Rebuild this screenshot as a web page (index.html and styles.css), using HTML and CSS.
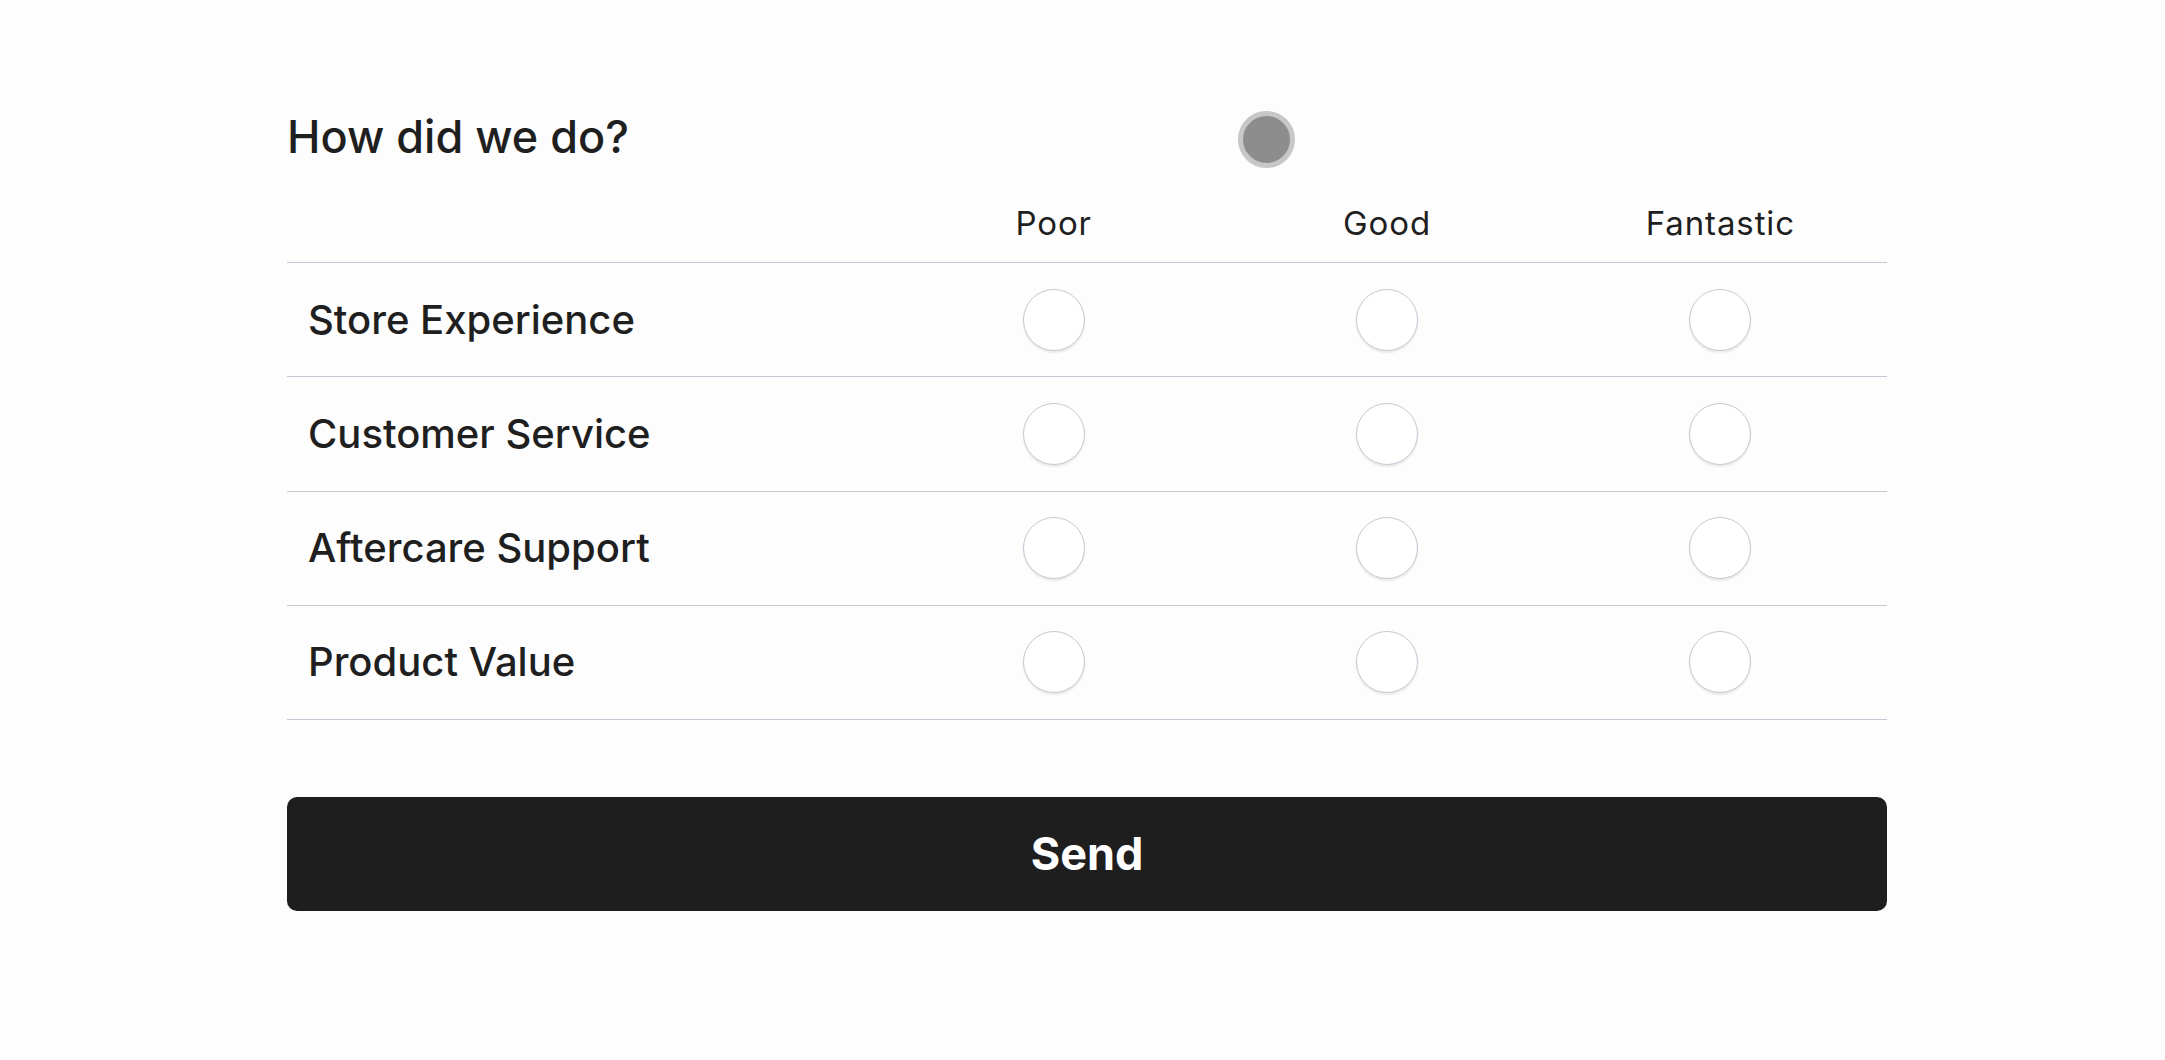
FILE: index.html
```html
<!DOCTYPE html>
<html lang="en">
<head>
<meta charset="utf-8">
<title>How did we do?</title>
<link rel="stylesheet" href="styles.css">
</head>
<body>
<main class="survey">
  <h1 class="survey-title">How did we do?</h1>
  <span class="indicator" aria-hidden="true"></span>
  <div class="grid">
    <div class="row head">
      <div class="label"></div>
      <div class="col-h">Poor</div>
      <div class="col-h">Good</div>
      <div class="col-h">Fantastic</div>
    </div>
    <div class="row">
      <div class="label">Store Experience</div>
      <div class="cell"><span class="radio"></span></div>
      <div class="cell"><span class="radio"></span></div>
      <div class="cell"><span class="radio"></span></div>
    </div>
    <div class="row">
      <div class="label">Customer Service</div>
      <div class="cell"><span class="radio"></span></div>
      <div class="cell"><span class="radio"></span></div>
      <div class="cell"><span class="radio"></span></div>
    </div>
    <div class="row">
      <div class="label">Aftercare Support</div>
      <div class="cell"><span class="radio"></span></div>
      <div class="cell"><span class="radio"></span></div>
      <div class="cell"><span class="radio"></span></div>
    </div>
    <div class="row">
      <div class="label">Product Value</div>
      <div class="cell"><span class="radio"></span></div>
      <div class="cell"><span class="radio"></span></div>
      <div class="cell"><span class="radio"></span></div>
    </div>
  </div>
  <button class="send" type="button">Send</button>
</main>
</body>
</html>
```
FILE: styles.css
```css
html, body {
  margin: 0;
  padding: 0;
  background: #fdfdfd;
}
body {
  font-family: Inter, "Noto Sans", sans-serif;
  color: #1f1f1f;
}
.survey {
  position: relative;
  width: 1600px;
  margin-left: 287px;
  padding-top: 109px;
}
.survey-title {
  margin: 0;
  font-size: 45px;
  line-height: 56px;
  font-weight: 500;
}
.indicator {
  position: absolute;
  left: 951px;
  top: 111px;
  width: 47px;
  height: 47px;
  border-radius: 50%;
  background: #8d8d8e;
  border: 5px solid #c7c7c7;
}
.grid {
  display: flex;
  flex-direction: column;
}
.row {
  display: grid;
  grid-template-columns: 600px 1fr 1fr 1fr;
  height: 113.2px;
  border-bottom: 1px solid #c3c9d5;
  align-items: center;
}
.row.head {
  height: 78.3px;
  padding-bottom: 19px;
  align-items: end;
}
.label {
  padding-left: 21px;
  font-size: 40px;
  font-weight: 500;
  line-height: 48px;
}
.col-h {
  text-align: center;
  font-size: 33px;
  line-height: 40px;
  letter-spacing: 0.9px;
}
.cell {
  display: flex;
  justify-content: center;
  align-items: center;
}
.radio {
  display: block;
  width: 60px;
  height: 60px;
  border-radius: 50%;
  background: #ffffff;
  border: 1.5px solid #c3c9d5;
  box-shadow: 0 2px 2px rgba(0, 0, 0, 0.08);
}
.send {
  display: block;
  width: 100%;
  height: 114px;
  margin-top: 76.5px;
  border: 0;
  border-radius: 10px;
  background: #1e1e1e;
  color: #ffffff;
  font-family: Inter, "Noto Sans", sans-serif;
  font-size: 45px;
  font-weight: 700;
  cursor: pointer;
}
```
